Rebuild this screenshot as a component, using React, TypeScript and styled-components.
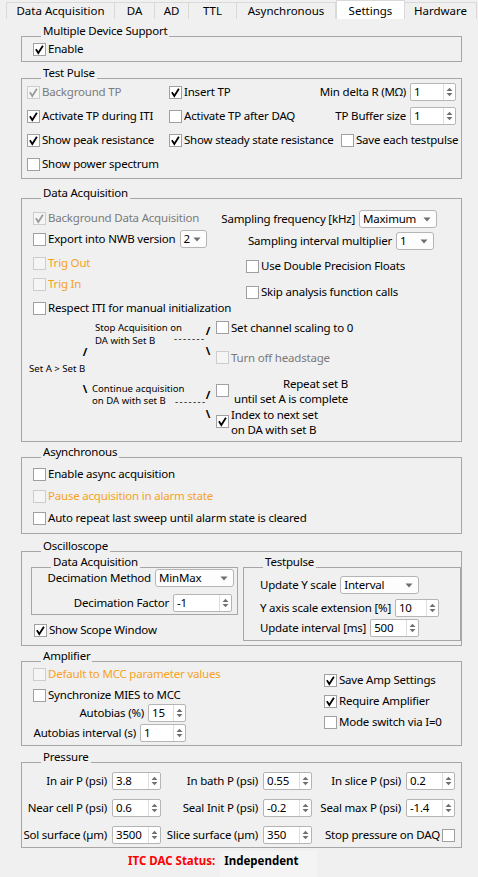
import React from "react";
import styled, { createGlobalStyle } from "styled-components";

const GlobalStyle = createGlobalStyle`
  html, body { margin: 0; padding: 0; background: #f0f0f0; }
  body {
    font-family: "Noto Sans", "Open Sans", "DejaVu Sans", sans-serif;
    font-size: 11.5px;
    letter-spacing: -0.2px;
    color: #000;
  }
  *, *::before, *::after { box-sizing: border-box; }
`;

type Tone = "normal" | "disabled" | "orange";
const toneColor = (t?: Tone) =>
  t === "disabled" ? "#7a7a7a" : t === "orange" ? "#f6a21c" : "#000000";

const Page = styled.div`
  width: 478px;
  min-height: 877px;
  background: #f0f0f0;
`;

/* ---------- Tabs ---------- */
const TabBar = styled.div`
  display: flex;
  align-items: flex-end;
  height: 19px;
  padding-left: 6px;
  letter-spacing: 0;
`;
const Tab = styled.div<{ $w: number; $active?: boolean; $first?: boolean }>`
  width: ${(p) => p.$w}px;
  height: ${(p) => (p.$active ? 19 : 17)}px;
  padding-top: ${(p) => (p.$active ? 2 : 0)}px;
  display: flex;
  align-items: center;
  justify-content: center;
  white-space: nowrap;
  background: ${(p) => (p.$active ? "#ffffff" : "#f0f0f0")};
  border: 1px solid #d9d9d9;
  border-bottom: none;
  border-left-width: ${(p) => (p.$active || p.$first ? 1 : 0)}px;
  line-height: 16px;
`;

/* ---------- Group boxes ---------- */
const Group = styled.section<{ $mt?: number; $ml?: number; $w?: number; $pad?: string }>`
  position: relative;
  width: ${(p) => p.$w ?? 441}px;
  margin: ${(p) => p.$mt ?? 0}px 0 0 ${(p) => p.$ml ?? 21}px;
  border: 1px solid #a6a6a6;
  padding: ${(p) => p.$pad ?? "0"};
  flex: none;
`;
const GroupTitle = styled.span`
  position: absolute;
  top: -14px;
  left: 19px;
  padding: 0 2px;
  line-height: 16px;
  background: #f0f0f0;
  white-space: nowrap;
`;

/* ---------- Rows / columns ---------- */
const Line = styled.div<{ $h?: number; $mt?: number; $pl?: number; $pr?: number; $end?: boolean }>`
  display: flex;
  align-items: center;
  flex: none;
  height: ${(p) => p.$h ?? 20}px;
  margin-top: ${(p) => p.$mt ?? 0}px;
  padding-left: ${(p) => p.$pl ?? 0}px;
  padding-right: ${(p) => p.$pr ?? 0}px;
  justify-content: ${(p) => (p.$end ? "flex-end" : "flex-start")};
  white-space: nowrap;
`;
const Cell = styled.div<{ $w: number }>`
  flex: none;
  width: ${(p) => p.$w}px;
  display: flex;
  align-items: center;
`;
const Push = styled.div`
  margin-left: auto;
  display: flex;
  align-items: center;
`;
const Split = styled.div`
  display: flex;
  align-items: flex-start;
`;
const Column = styled.div<{ $w?: number; $pl?: number; $ml?: number; $pt?: number }>`
  display: flex;
  flex-direction: column;
  flex: none;
  ${(p) => (p.$w ? `width: ${p.$w}px;` : "")}
  padding-left: ${(p) => p.$pl ?? 0}px;
  margin-left: ${(p) => p.$ml ?? 0}px;
  padding-top: ${(p) => p.$pt ?? 0}px;
`;

/* ---------- Checkbox ---------- */
const BoxFrame = styled.span<{ $disabled?: boolean }>`
  flex: none;
  width: 13px;
  height: 13px;
  border: 1px solid ${(p) => (p.$disabled ? "#cdcdcd" : "#a0a0a0")};
  background: ${(p) => (p.$disabled ? "#f5f5f5" : "#ffffff")};
  display: inline-flex;
  align-items: center;
  justify-content: center;
`;
function CheckBox({ checked, disabled }: { checked?: boolean; disabled?: boolean }) {
  return (
    <BoxFrame $disabled={disabled}>
      {checked && (
        <svg width="11" height="11" viewBox="0 0 11 11">
          <path
            d="M1.9 5.3 L4.3 9 L8.9 1.8"
            fill="none"
            stroke={disabled ? "#9c9c9c" : "#000000"}
            strokeWidth={1.8}
          />
        </svg>
      )}
    </BoxFrame>
  );
}
const CheckLabel = styled.label<{ $tone?: Tone }>`
  display: inline-flex;
  align-items: center;
  gap: 2px;
  white-space: nowrap;
  line-height: 16px;
  color: ${(p) => toneColor(p.$tone)};
`;
function Check({
  label,
  checked,
  disabled,
  tone,
  boxAfter,
}: {
  label: string;
  checked?: boolean;
  disabled?: boolean;
  tone?: Tone;
  boxAfter?: boolean;
}) {
  return (
    <CheckLabel $tone={tone}>
      {!boxAfter && <CheckBox checked={checked} disabled={disabled} />}
      <span>{label}</span>
      {boxAfter && <CheckBox checked={checked} disabled={disabled} />}
    </CheckLabel>
  );
}

/* ---------- Spin box & dropdown ---------- */
const SpinFrame = styled.span<{ $w: number }>`
  flex: none;
  display: inline-flex;
  width: ${(p) => p.$w}px;
  height: 18px;
  border: 1px solid #b5b5b5;
  border-radius: 2px;
  background: #ffffff;
  overflow: hidden;
`;
const SpinText = styled.span`
  flex: 1;
  padding-left: 3px;
  line-height: 16px;
  color: #000;
`;
const SpinButtons = styled.span`
  flex: none;
  width: 12px;
  border-left: 1px solid #dedede;
  display: flex;
  align-items: center;
  justify-content: center;
`;
function Spin({ value, w }: { value: string; w: number }) {
  return (
    <SpinFrame $w={w}>
      <SpinText>{value}</SpinText>
      <SpinButtons>
        <svg width="7" height="12" viewBox="0 0 7 12">
          <path d="M0.5 5 L3.5 1.8 L6.5 5 Z M0.5 7 L3.5 10.2 L6.5 7 Z" fill="#707070" />
        </svg>
      </SpinButtons>
    </SpinFrame>
  );
}
const SelectFrame = styled.span<{ $w: number }>`
  flex: none;
  display: inline-flex;
  align-items: center;
  justify-content: space-between;
  width: ${(p) => p.$w}px;
  height: 18px;
  padding: 0 5px 0 3px;
  border: 1px solid #b5b5b5;
  border-radius: 3px;
  background: #fdfdfd;
  line-height: 16px;
  color: #000;
`;
function Select({ value, w }: { value: string; w: number }) {
  return (
    <SelectFrame $w={w}>
      <span>{value}</span>
      <svg width="8" height="5" viewBox="0 0 8 5">
        <path d="M0.5 0.5 L7.5 0.5 L4 4.5 Z" fill="#6e6e6e" />
      </svg>
    </SelectFrame>
  );
}
const Field = styled.span<{ $gap?: number }>`
  display: inline-flex;
  align-items: center;
  gap: ${(p) => p.$gap ?? 4}px;
  white-space: nowrap;
  line-height: 16px;
`;

/* ---------- Trigger diagram ---------- */
const Diagram = styled.div`
  position: relative;
  height: 122px;
`;
const Note = styled.div<{ $x: number; $y: number; $lh: number; $small?: boolean; $tone?: Tone; $w?: number; $right?: boolean }>`
  position: absolute;
  left: ${(p) => p.$x}px;
  top: ${(p) => p.$y}px;
  line-height: ${(p) => p.$lh}px;
  font-size: ${(p) => (p.$small ? 9.6 : 11.5)}px;
  letter-spacing: ${(p) => (p.$small ? 0 : -0.2)}px;
  color: ${(p) => toneColor(p.$tone)};
  white-space: nowrap;
  ${(p) => (p.$w ? `width: ${p.$w}px;` : "")}
  text-align: ${(p) => (p.$right ? "right" : "left")};
`;
const Dashes = styled.div<{ $x: number; $y: number }>`
  position: absolute;
  left: ${(p) => p.$x}px;
  top: ${(p) => p.$y}px;
  font-size: 9.6px;
  line-height: 8px;
  letter-spacing: 1.4px;
`;
const Slash = styled.div<{ $x: number; $y: number }>`
  position: absolute;
  left: ${(p) => p.$x}px;
  top: ${(p) => p.$y}px;
  width: 6px;
  height: 11px;
  line-height: 11px;
  text-align: center;
  font-size: 11px;
  font-weight: 700;
  letter-spacing: 0;
`;
const Pin = styled.div<{ $x: number; $y: number }>`
  position: absolute;
  left: ${(p) => p.$x}px;
  top: ${(p) => p.$y}px;
  display: flex;
`;

/* ---------- Pressure ---------- */
const PressureGrid = styled.div`
  display: grid;
  grid-template-columns: 139px 151px 143px;
  grid-auto-rows: 20px;
  row-gap: 7px;
  padding: 8px 0 2px 0;
  justify-items: end;
  align-items: center;
`;

/* ---------- Footer ---------- */
const Footer = styled.div`
  display: flex;
  align-items: stretch;
  margin-top: 3px;
  padding-left: 128px;
  height: 26px;
  letter-spacing: 0;
`;
const StatusLabel = styled.span`
  color: #ff0000;
  font-weight: 700;
  line-height: 16px;
  padding-top: 2px;
  white-space: nowrap;
`;
const StatusValue = styled.span`
  margin-left: 5px;
  width: 97px;
  padding: 2px 0 0 4px;
  line-height: 16px;
  background: #f4f4f4;
  font-weight: 700;
  white-space: nowrap;
`;

const tabs = [
  { label: "Data Acquisition", w: 109 },
  { label: "DA", w: 40 },
  { label: "AD", w: 34 },
  { label: "TTL", w: 48 },
  { label: "Asynchronous", w: 99 },
  { label: "Settings", w: 69, active: true },
  { label: "Hardware", w: 72 },
];

export default function App() {
  return (
    <Page>
      <GlobalStyle />
      <TabBar>
        {tabs.map((t, i) => (
          <Tab key={t.label} $w={t.w} $active={t.active} $first={i === 0}>
            {t.label}
          </Tab>
        ))}
      </TabBar>

      <Group $mt={17} $pad="0 0 0 11px">
        <GroupTitle>Multiple Device Support</GroupTitle>
        <Line $h={24}>
          <Check label="Enable" checked />
        </Line>
      </Group>

      <Group $mt={16} $pad="1px 5px 2px 5px">
        <GroupTitle>Test Pulse</GroupTitle>
        <Line $h={24}>
          <Cell $w={142}>
            <Check label="Background TP" checked disabled tone="disabled" />
          </Cell>
          <Check label="Insert TP" checked />
          <Push>
            <Field>
              Min delta R (MΩ)
              <Spin value="1" w={46} />
            </Field>
          </Push>
        </Line>
        <Line $h={24}>
          <Cell $w={142}>
            <Check label="Activate TP during ITI" checked />
          </Cell>
          <Check label="Activate TP after DAQ" />
          <Push>
            <Field>
              TP Buffer size
              <Spin value="1" w={46} />
            </Field>
          </Push>
        </Line>
        <Line $h={24}>
          <Cell $w={142}>
            <Check label="Show peak resistance" checked />
          </Cell>
          <Cell $w={172}>
            <Check label="Show steady state resistance" checked />
          </Cell>
          <Check label="Save each testpulse" />
        </Line>
        <Line $h={24}>
          <Check label="Show power spectrum" />
        </Line>
      </Group>

      <Group $mt={19} $pad="0 0 1px 0">
        <GroupTitle>Data Acquisition</GroupTitle>
        <Split>
          <Column $w={196} $pl={11} $pt={9}>
            <Line>
              <Check label="Background Data Acquisition" checked disabled tone="disabled" />
            </Line>
            <Line $mt={1}>
              <Field>
                <Check label="Export into NWB version" />
                <Select value="2" w={27} />
              </Field>
            </Line>
            <Line $mt={4}>
              <Check label="Trig Out" disabled tone="orange" />
            </Line>
            <Line $mt={1}>
              <Check label="Trig In" disabled tone="orange" />
            </Line>
            <Line $mt={4}>
              <Check label="Respect ITI for manual initialization" />
            </Line>
          </Column>
          <Column $w={219} $pt={10}>
            <Line $end>
              <Field>
                Sampling frequency [kHz]
                <Select value="Maximum" w={78} />
              </Field>
            </Line>
            <Line $mt={2} $end $pr={3}>
              <Field>
                Sampling interval multiplier
                <Select value="1" w={38} />
              </Field>
            </Line>
            <Line $mt={5} $pl={28}>
              <Check label="Use Double Precision Floats" />
            </Line>
            <Line $mt={6} $pl={28}>
              <Check label="Skip analysis function calls" />
            </Line>
          </Column>
        </Split>
        <Diagram>
          <Note $x={73} $y={4} $lh={12} $small>
            Stop Acquisition on
          </Note>
          <Note $x={73} $y={16.5} $lh={12} $small>
            DA with Set B
          </Note>
          <Dashes $x={152} $y={17}>-------</Dashes>
          <Slash $x={183} $y={7}>/</Slash>
          <Slash $x={183} $y={26.5}>\</Slash>
          <Slash $x={60} $y={27.5}>/</Slash>
          <Note $x={7} $y={43.5} $lh={13} $small>
            Set A &gt; Set B
          </Note>
          <Slash $x={60} $y={64.5}>\</Slash>
          <Note $x={70} $y={64.5} $lh={12} $small>
            Continue acquisition
          </Note>
          <Note $x={70} $y={77} $lh={12} $small>
            on DA with set B
          </Note>
          <Dashes $x={153} $y={80}>-------</Dashes>
          <Slash $x={183} $y={70.5}>/</Slash>
          <Slash $x={183} $y={89.5}>\</Slash>

          <Pin $x={194} $y={3}>
            <CheckBox />
          </Pin>
          <Note $x={209} $y={1.5} $lh={16}>
            Set channel scaling to 0
          </Note>
          <Pin $x={194} $y={33}>
            <CheckBox disabled />
          </Pin>
          <Note $x={209} $y={31.5} $lh={16} $tone="disabled">
            Turn off headstage
          </Note>
          <Pin $x={194} $y={66}>
            <CheckBox />
          </Pin>
          <Note $x={209} $y={57.5} $lh={15.5} $w={117} $right>
            Repeat set B
            <br />
            until set A is complete
          </Note>
          <Pin $x={194} $y={97}>
            <CheckBox checked />
          </Pin>
          <Note $x={209} $y={88.5} $lh={15}>
            Index to next set
            <br />
            on DA with set B
          </Note>
        </Diagram>
      </Group>

      <Group $mt={15} $pad="5px 0 4px 11px">
        <GroupTitle>Asynchronous</GroupTitle>
        <Line $h={22}>
          <Check label="Enable async acquisition" />
        </Line>
        <Line $h={22}>
          <Check label="Pause acquisition in alarm state" disabled tone="orange" />
        </Line>
        <Line $h={22}>
          <Check label="Auto repeat last sweep until alarm state is cleared" />
        </Line>
      </Group>

      <Group $mt={17} $pad="15px 0 4px 9px">
        <GroupTitle>Oscilloscope</GroupTitle>
        <Split>
          <Column $w={207}>
            <Group $ml={0} $w={207} $pad="0 3px 1px 0">
              <GroupTitle>Data Acquisition</GroupTitle>
              <Line $end>
                <Field>
                  Decimation Method
                  <Select value="MinMax" w={79} />
                </Field>
              </Line>
              <Line $mt={5} $end $pr={2}>
                <Field>
                  Decimation Factor
                  <Spin value="-1" w={59} />
                </Field>
              </Line>
            </Group>
            <Line $mt={5} $pl={3}>
              <Check label="Show Scope Window" checked />
            </Line>
          </Column>
          <Group $ml={5} $w={218} $pad="7px 0 2px 16px">
            <GroupTitle>Testpulse</GroupTitle>
            <Line>
              <Field>
                Update Y scale
                <Select value="Interval" w={79} />
              </Field>
            </Line>
            <Line $mt={3}>
              <Field>
                Y axis scale extension [%]
                <Spin value="10" w={44} />
              </Field>
            </Line>
            <Line>
              <Field>
                Update interval [ms]
                <Spin value="500" w={49} />
              </Field>
            </Line>
          </Group>
        </Split>
      </Group>

      <Group $mt={15} $pad="0 0 3px 0">
        <GroupTitle>Amplifier</GroupTitle>
        <Split>
          <Column $w={164}>
            <Line $mt={2} $pl={11}>
              <Check label="Default to MCC parameter values" disabled tone="orange" />
            </Line>
            <Line $mt={1} $pl={11}>
              <Check label="Synchronize MIES to MCC" />
            </Line>
            <Line $mt={-1} $h={18} $end>
              <Field>
                Autobias (%)
                <Spin value="15" w={38} />
              </Field>
            </Line>
            <Line $mt={2} $h={18} $end>
              <Field>
                Autobias interval (s)
                <Spin value="1" w={46} />
              </Field>
            </Line>
          </Column>
          <Column $ml={138} $pt={8}>
            <Line>
              <Check label="Save Amp Settings" checked />
            </Line>
            <Line $mt={1}>
              <Check label="Require Amplifier" checked />
            </Line>
            <Line $mt={1}>
              <Check label="Mode switch via I=0" />
            </Line>
          </Column>
        </Split>
      </Group>

      <Group $mt={16}>
        <GroupTitle>Pressure</GroupTitle>
        <PressureGrid>
          <Field $gap={5}>
            In air P (psi)
            <Spin value="3.8" w={49} />
          </Field>
          <Field $gap={5}>
            In bath P (psi)
            <Spin value="0.55" w={49} />
          </Field>
          <Field $gap={5}>
            In slice P (psi)
            <Spin value="0.2" w={49} />
          </Field>
          <Field $gap={5}>
            Near cell P (psi)
            <Spin value="0.6" w={49} />
          </Field>
          <Field $gap={5}>
            Seal Init P (psi)
            <Spin value="-0.2" w={49} />
          </Field>
          <Field $gap={5}>
            Seal max P (psi)
            <Spin value="-1.4" w={49} />
          </Field>
          <Field $gap={5}>
            Sol surface (µm)
            <Spin value="3500" w={49} />
          </Field>
          <Field $gap={5}>
            Slice surface (µm)
            <Spin value="350" w={49} />
          </Field>
          <Check label="Stop pressure on DAQ" boxAfter />
        </PressureGrid>
      </Group>

      <Footer>
        <StatusLabel>ITC DAC Status:</StatusLabel>
        <StatusValue>Independent</StatusValue>
      </Footer>
    </Page>
  );
}
